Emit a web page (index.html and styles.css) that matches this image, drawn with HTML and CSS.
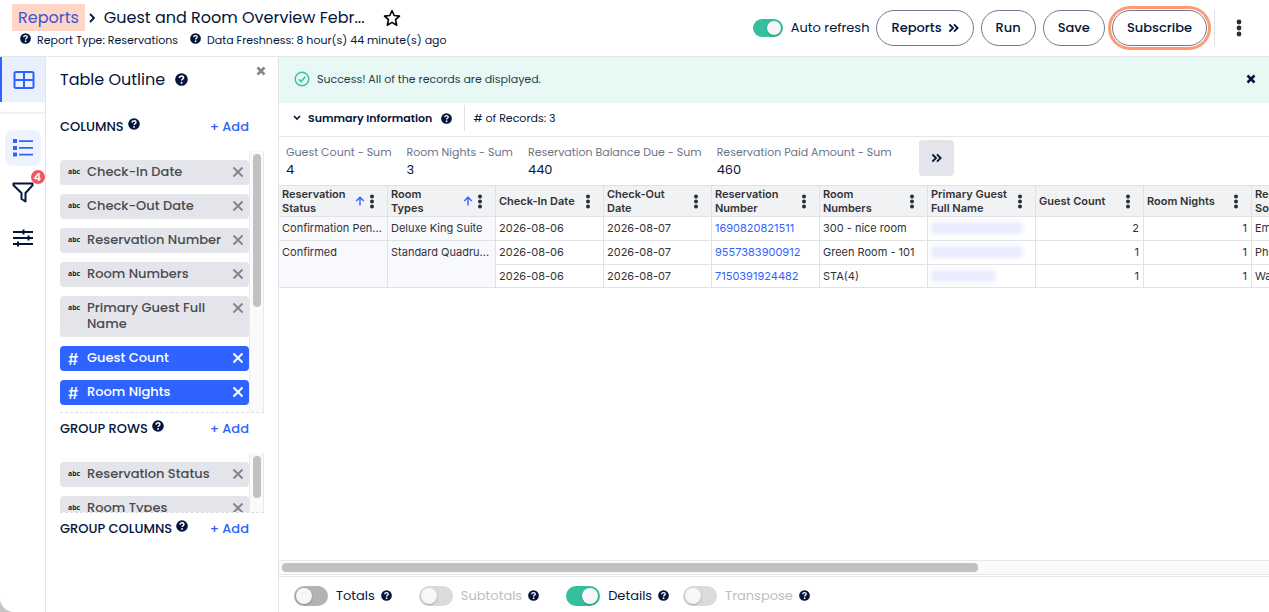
FILE: index.html
```html
<!DOCTYPE html>
<html lang="en">
<head>
<meta charset="utf-8">
<title>Guest and Room Overview</title>
<link rel="stylesheet" href="styles.css">
</head>
<body>
<svg class="sprite" aria-hidden="true">
  <symbol id="help" viewBox="0 0 14 14"><circle cx="7" cy="7" r="6.8" fill="#04153c"/><path d="M4.8 5.4C4.8 4.1 5.8 3.3 7 3.3s2.2.8 2.2 1.9c0 1.5-2.1 1.5-2.1 3" fill="none" stroke="#fff" stroke-width="1.7"/><circle cx="7.1" cy="10.4" r="1.1" fill="#fff"/></symbol>
  <symbol id="dots" viewBox="0 0 6 18"><circle cx="3" cy="3" r="2.4"/><circle cx="3" cy="9" r="2.4"/><circle cx="3" cy="15" r="2.4"/></symbol>
  <symbol id="cross" viewBox="0 0 12 12"><path d="M1.5 1.5l9 9M10.5 1.5l-9 9" fill="none" stroke="currentColor" stroke-width="2"/></symbol>
  <symbol id="cross-bold" viewBox="0 0 10 10"><path d="M1.5 1.5l7 7M8.5 1.5l-7 7" fill="none" stroke="currentColor" stroke-width="2.5"/></symbol>
  <symbol id="chevrons" viewBox="0 0 12 10"><path d="M1.5 1l4 4-4 4M6.500 1l4 4-4 4" fill="none" stroke="currentColor" stroke-width="2"/></symbol>
  <symbol id="up" viewBox="0 0 10 10"><path d="M5 9.5V1.5M1.2 5L5 1.2 8.800 5" fill="none" stroke="#2f63ff" stroke-width="1.4"/></symbol>
</svg>
<div class="app">
  <header class="header">
    <div class="heading">
      <div class="crumbs">
        <a class="crumb-link" href="#">Reports</a>
        <svg class="crumb-arrow" viewBox="0 0 6 10"><path d="M1 1l4 4-4 4" fill="none" stroke="#04153c" stroke-width="1.8"/></svg>
        <h1 class="page-title">Guest and Room Overview Febr...</h1>
        <button class="bare star" aria-label="Favorite"><svg viewBox="0 0 18 18" width="18" height="18"><path d="M9 1.500l2.200 5 5.300.6-4 3.600 1.200 5.500L9 13.400l-4.700 2.800 1.200-5.500-4-3.600 5.300-.6z" fill="none" stroke="#000" stroke-width="1.6" stroke-linejoin="round"/></svg></button>
      </div>
      <div class="meta">
        <span class="meta-item"><svg class="help-s"><use href="#help"/></svg><span>Report Type: Reservations</span></span>
        <span class="meta-item"><svg class="help-s"><use href="#help"/></svg><span>Data Freshness: 8 hour(s) 44 minute(s) ago</span></span>
      </div>
    </div>
    <div class="actions">
      <label class="auto"><input class="switch switch-small" type="checkbox" role="switch" checked><span>Auto refresh</span></label>
      <button class="pill">Reports <svg class="chev"><use href="#chevrons"/></svg></button>
      <button class="pill">Run</button>
      <button class="pill">Save</button>
      <button class="pill pill-ring">Subscribe</button>
      <span class="divider"></span>
      <button class="bare more" aria-label="More"><svg class="more-dots"><use href="#dots"/></svg></button>
    </div>
  </header>
  <div class="body">
    <nav class="rail">
      <button class="bare rail-tab" aria-label="Table"><svg viewBox="0 0 22 18" width="22" height="18"><g fill="none" stroke="#2f63ff" stroke-width="2"><rect x="1.500" y="1" width="19" height="16" rx="1.500"/><path d="M11 1v16M1.500 9h19"/></g></svg></button>
      <div class="rail-tools">
        <button class="bare rail-btn rail-active" aria-label="Outline"><svg viewBox="0 0 22 18" width="22" height="18"><g fill="#2f63ff"><path d="M1 0h4v4H1zM1 7h4v4H1zM1 13.500h4v4H1z"/><path d="M7 1.200h14v1.800H7zM7 8h14v1.800H7zM7 14.800h14v1.800H7z"/></g></svg></button>
        <button class="bare rail-btn" aria-label="Filters"><svg viewBox="0 0 22 22" width="22" height="22"><path d="M1.500 1.500h19v1.800l-7 7.700v8.500l-4-2.500v-6l-8-7.700z" fill="none" stroke="#04153c" stroke-width="2" stroke-linejoin="round"/></svg><span class="badge">4</span></button>
        <button class="bare rail-btn" aria-label="Settings"><svg viewBox="0 0 22 18" width="22" height="18"><path d="M1 3h20M1 9h20M1 15h20M11.500 0.500v5M16.500 6.500v5M6 12.500v5" fill="none" stroke="#04153c" stroke-width="2"/></svg></button>
      </div>
    </nav>
    <aside class="panel">
      <div class="panel-top"><h2 class="panel-title">Table Outline</h2><svg class="help-m"><use href="#help"/></svg><button class="bare panel-close" aria-label="Close"><svg class="x-bold"><use href="#cross-bold"/></svg></button></div>
      <div class="sec-head"><h3 class="sec-title">COLUMNS</h3><svg class="help-sec"><use href="#help"/></svg><button class="bare add">+ Add</button></div>
      <div class="list list-long">
        <ul class="chips">
          <li class="chip"><span class="kind">abc</span><span class="name">Check-In Date</span><button class="bare" aria-label="Remove"><svg class="x"><use href="#cross"/></svg></button></li>
          <li class="chip"><span class="kind">abc</span><span class="name">Check-Out Date</span><button class="bare" aria-label="Remove"><svg class="x"><use href="#cross"/></svg></button></li>
          <li class="chip"><span class="kind">abc</span><span class="name">Reservation Number</span><button class="bare" aria-label="Remove"><svg class="x"><use href="#cross"/></svg></button></li>
          <li class="chip"><span class="kind">abc</span><span class="name">Room Numbers</span><button class="bare" aria-label="Remove"><svg class="x"><use href="#cross"/></svg></button></li>
          <li class="chip"><span class="kind">abc</span><span class="name">Primary Guest Full Name</span><button class="bare" aria-label="Remove"><svg class="x"><use href="#cross"/></svg></button></li>
          <li class="chip chip-blue"><span class="kind hash">#</span><span class="name">Guest Count</span><button class="bare" aria-label="Remove"><svg class="x"><use href="#cross"/></svg></button></li>
          <li class="chip chip-blue"><span class="kind hash">#</span><span class="name">Room Nights</span><button class="bare" aria-label="Remove"><svg class="x"><use href="#cross"/></svg></button></li>
        </ul>
        <div class="track"><div class="thumb thumb-long"></div></div>
      </div>
      <div class="sec-head"><h3 class="sec-title">GROUP ROWS</h3><svg class="help-sec"><use href="#help"/></svg><button class="bare add">+ Add</button></div>
      <div class="list list-short">
        <ul class="chips">
          <li class="chip"><span class="kind">abc</span><span class="name">Reservation Status</span><button class="bare" aria-label="Remove"><svg class="x"><use href="#cross"/></svg></button></li>
          <li class="chip"><span class="kind">abc</span><span class="name">Room Types</span><button class="bare" aria-label="Remove"><svg class="x"><use href="#cross"/></svg></button></li>
        </ul>
        <div class="track"><div class="thumb thumb-short"></div></div>
      </div>
      <div class="sec-head"><h3 class="sec-title">GROUP COLUMNS</h3><svg class="help-sec"><use href="#help"/></svg><button class="bare add">+ Add</button></div>
    </aside>
    <main class="main">
      <div class="alert" role="status"><svg viewBox="0 0 16 16" width="16" height="16"><g fill="none" stroke="#36c2a1" stroke-width="1.4"><circle cx="8" cy="8" r="6.8"/><path d="M4.800 8.200l2.300 2.300 4.200-4.700" stroke-width="1.6"/></g></svg><span>Success! All of the records are displayed.</span><button class="bare alert-close" aria-label="Dismiss"><svg class="x-bold"><use href="#cross-bold"/></svg></button></div>
      <div class="summary">
        <button class="bare summary-toggle"><svg viewBox="0 0 8 6" width="8" height="6"><path d="M1 1l3 3 3-3" fill="none" stroke="#04153c" stroke-width="1.6"/></svg>Summary Information</button>
        <svg class="help-s"><use href="#help"/></svg>
        <span class="records"># of Records: 3</span>
      </div>
      <div class="metrics">
        <dl class="metric"><dt>Guest Count - Sum</dt><dd>4</dd></dl>
        <dl class="metric"><dt>Room Nights - Sum</dt><dd>3</dd></dl>
        <dl class="metric"><dt>Reservation Balance Due - Sum</dt><dd>440</dd></dl>
        <dl class="metric"><dt>Reservation Paid Amount - Sum</dt><dd>460</dd></dl>
        <button class="bare next" aria-label="Next"><svg class="chev"><use href="#chevrons"/></svg></button>
      </div>
      <div class="grid-wrap">
        <table class="grid">
          <thead><tr>
            <th class="first"><div class="th"><span>Reservation Status</span><svg class="up"><use href="#up"/></svg><svg class="dots"><use href="#dots"/></svg></div></th>
            <th><div class="th"><span>Room<br>Types</span><svg class="up"><use href="#up"/></svg><svg class="dots"><use href="#dots"/></svg></div></th>
            <th><div class="th"><span>Check-In Date</span><svg class="dots"><use href="#dots"/></svg></div></th>
            <th><div class="th"><span>Check-Out<br>Date</span><svg class="dots"><use href="#dots"/></svg></div></th>
            <th><div class="th"><span>Reservation Number</span><svg class="dots"><use href="#dots"/></svg></div></th>
            <th><div class="th"><span>Room<br>Numbers</span><svg class="dots"><use href="#dots"/></svg></div></th>
            <th><div class="th"><span>Primary Guest Full Name</span><svg class="dots"><use href="#dots"/></svg></div></th>
            <th><div class="th"><span>Guest Count</span><svg class="dots"><use href="#dots"/></svg></div></th>
            <th><div class="th"><span>Room Nights</span><svg class="dots"><use href="#dots"/></svg></div></th>
            <th><div class="th"><span>Reservation Source</span></div></th>
          </tr></thead>
          <tbody>
            <tr><td class="group">Confirmation Pen...</td><td class="group">Deluxe King Suite</td><td>2026-08-06</td><td>2026-08-07</td><td><a href="#">1690820821511</a></td><td>300 - nice room</td><td><span class="masked"></span></td><td class="num">2</td><td class="num">1</td><td>Email</td></tr>
            <tr><td class="group" rowspan="2">Confirmed</td><td class="group" rowspan="2">Standard Quadru...</td><td>2026-08-06</td><td>2026-08-07</td><td><a href="#">9557383900912</a></td><td>Green Room - 101</td><td><span class="masked"></span></td><td class="num">1</td><td class="num">1</td><td>Phone</td></tr>
            <tr class="last"><td>2026-08-06</td><td>2026-08-07</td><td><a href="#">7150391924482</a></td><td>STA(4)</td><td><span class="masked masked-short"></span></td><td class="num">1</td><td class="num">1</td><td>Walk-In</td></tr>
          </tbody>
        </table>
      </div>
      <div class="hscroll"><div class="hthumb"></div></div>
      <footer class="options">
        <div class="option option-dark option-wide"><label><input class="switch" type="checkbox" role="switch"><span>Totals</span></label><svg class="help-s"><use href="#help"/></svg></div>
        <div class="option option-off option-wide"><label><input class="switch" type="checkbox" role="switch" disabled><span>Subtotals</span></label><svg class="help-s"><use href="#help"/></svg></div>
        <div class="option"><label><input class="switch" type="checkbox" role="switch" checked><span>Details</span></label><svg class="help-s"><use href="#help"/></svg></div>
        <div class="option option-off"><label><input class="switch" type="checkbox" role="switch" disabled><span>Transpose</span></label><svg class="help-s"><use href="#help"/></svg></div>
      </footer>
    </main>
  </div>
</div>
</body>
</html>
```
FILE: styles.css
```css
* { box-sizing: border-box; }
body { margin: 0; background: #c4c4c4; color: #04153c; font-family: Poppins, Inter, sans-serif; font-size: 13px; }
h1, h2, h3, ul, dl, dd { margin: 0; padding: 0; font-weight: 400; }
svg { display: block; flex: none; }
a { color: #2f63ff; text-decoration: none; }
.sprite { width: 0; height: 0; position: absolute; }
.bare { border: 0; padding: 0; background: none; color: inherit; font: inherit; }
.app { height: 100vh; display: flex; flex-direction: column; background: #fff; border-bottom-left-radius: 14px; overflow: hidden; }
.help-s { width: 11px; height: 11px; }
.help-m { width: 13px; height: 13px; }
.x { width: 12px; height: 12px; }
.x-bold { width: 10px; height: 10px; }
.chev { width: 11px; height: 10px; }

.header { display: flex; justify-content: space-between; height: 57px; border-bottom: 1px solid #e4e5e9; }
.heading { padding: 4px 0 0 12px; }
.crumbs { display: flex; align-items: center; height: 27px; font-size: 16px; }
.crumb-link { padding: 0 6px; line-height: 27px; background: #ffd5c8; color: #3a57cf; }
.crumb-arrow { width: 6px; height: 10px; margin: 0 9px 0 4px; }
.page-title { font-size: 16px; }
.star { margin-left: 18px; }
.meta { display: flex; gap: 12px; padding-left: 8px; font-size: 11px; line-height: 18px; }
.meta-item { display: flex; gap: 6px; }
.meta-item .help-s { margin-top: 2px; }
.actions { display: flex; align-items: center; gap: 7px; padding-right: 27px; }
.auto { display: flex; align-items: center; gap: 8px; }
.pill { display: flex; align-items: center; gap: 6px; height: 36px; padding: 0 14px; border: 1px solid #6f7892; border-radius: 18px; background: #fff; color: #04153c; font: 500 13px Poppins, Inter, sans-serif; }
.pill-ring { box-shadow: 0 0 0 1px #fff, 0 0 0 4px #ff9a73; }
.divider { width: 1px; height: 36px; background: #dfe0e5; }
.more { padding-left: 14px; }
.more-dots { width: 6px; height: 18px; fill: #2d2f36; }

.switch { appearance: none; position: relative; width: 34px; height: 20px; margin: 0; border-radius: 10px; background: #dbdbdb; }
.switch::before { content: ""; position: absolute; left: 2px; top: 2px; width: 16px; height: 16px; border-radius: 50%; background: #f7f7f7; box-shadow: 0 1px 2px rgba(0, 0, 0, .25); }
.switch:checked { background: #35bf9f; }
.switch:checked::before { left: auto; right: 2px; }
.switch-small { width: 30px; height: 18px; }
.switch-small::before { width: 14px; height: 14px; }

.body { flex: 1; display: flex; min-height: 0; }
.rail { flex: none; width: 46px; border-right: 1px solid #e4e5e9; }
.rail-tab { display: flex; align-items: center; justify-content: center; width: 100%; height: 45px; border-left: 2px solid #2f63ff; background: #e9effd; }
.rail-tools { display: flex; flex-direction: column; align-items: center; gap: 9px; margin-top: 10px; padding-top: 16px; border-top: 2px solid #f0f1f3; }
.rail-btn { position: relative; display: flex; align-items: center; justify-content: center; width: 36px; height: 36px; border-radius: 8px; }
.rail-active { background: #edf2fd; }
.badge { position: absolute; top: -5px; right: -4px; width: 14px; border-radius: 7px; background: #f5545f; color: #fff; font-size: 11px; font-weight: 600; line-height: 14px; text-align: center; }

.panel { flex: none; width: 233px; padding: 0 14px; border-right: 1px solid #e4e5e9; }
.panel-top { display: flex; align-items: center; gap: 10px; height: 54px; padding-bottom: 10px; }
.panel-title { font-size: 16px; }
.panel-close { align-self: flex-start; margin-left: auto; margin-right: -2px; padding-top: 9px; color: #85868a; }
.sec-head { display: flex; align-items: center; gap: 4px; height: 40px; padding: 0 15px 9px 0; }
.sec-title { font-size: 13px; font-weight: 500; }
.help-sec { width: 12px; height: 12px; margin-bottom: 5px; }
.add { margin-left: auto; color: #2f63ff; font-weight: 500; }
.list { display: flex; overflow: hidden; border-bottom: 1px dashed #dcdde1; }
.list-long { height: 262px; }
.list-short { height: 60px; }
.chips { flex: 1; display: flex; flex-direction: column; gap: 9px; padding-top: 9px; list-style: none; }
.chip { flex: none; display: flex; align-items: flex-start; padding: 4px 5px 5px 8px; border-radius: 4px; background: #e4e5ea; color: #4a4b50; font-weight: 500; line-height: 16px; }
.kind { width: 19px; color: #26272b; font: 700 7px/15px "Noto Sans", sans-serif; }
.hash { color: inherit; font: 500 16px/18px Inter, sans-serif; height: 16px; }
.name { flex: 1; }
.chip .x { margin-top: 2px; color: #85868a; }
.chip-blue { background: #2f63ff; color: #fff; }
.chip-blue .x { color: #fff; }
.track { width: 15px; padding: 3px 3px 0; border: solid #e9e9eb; border-width: 0 1px; background: #fafafa; }
.thumb { width: 8px; border-radius: 4px; background: #c1c1c1; }
.thumb-long { height: 153px; }
.thumb-short { height: 42px; }

.main { flex: 1; min-width: 0; display: flex; flex-direction: column; }
.alert { display: flex; align-items: center; gap: 7px; height: 46px; padding: 0 13px 2px 15px; background: #e8f8f5; color: #1c3f4b; font-size: 11px; }
.alert-close { margin-left: auto; color: #04153c; }
.summary { display: flex; align-items: center; gap: 9px; height: 34px; padding: 0 14px 3px; border-bottom: 1px solid #e4e5e9; font-size: 11px; }
.summary-toggle { display: flex; align-items: center; gap: 7px; font-weight: 600; }
.records { margin-left: 3px; padding-left: 8px; border-left: 1px solid #dfe0e5; line-height: 26px; }
.metrics { display: flex; gap: 15px; height: 48px; padding: 3px 7px 0; }
.metric { padding-top: 4px; }
.metric dt { color: #6c7385; font-size: 11px; line-height: 17px; }
.metric dd { line-height: 17px; }
.next { display: flex; align-items: center; justify-content: center; width: 35px; height: 36px; margin-left: 12px; border-radius: 4px; background: #e4e5ea; }

.grid-wrap { flex: 1; min-height: 0; overflow: hidden; }
.grid { width: 1081px; table-layout: fixed; border-collapse: separate; border-spacing: 0; border-top: 1px solid #dfe1e5; color: #303238; font-family: Inter, sans-serif; font-size: 11px; }
.grid th { width: 108px; height: 31px; padding: 0 12px 0 3px; border: solid #dfe1e5; border-width: 0 1px 1px 0; background: #f1f2f4; font-weight: 600; text-align: left; line-height: 14px; }
.grid .first { width: 109px; }
.th { display: flex; align-items: center; gap: 4px; }
.th span { flex: 1; }
.up { width: 10px; height: 10px; }
.dots { width: 6px; height: 15px; fill: #2d2f36; }
.grid td { height: 24px; padding: 0 4px 1px 3px; border: solid #dfe1e5; border-width: 0 1px 1px 0; white-space: nowrap; line-height: 16px; }
.grid .last td { height: 23px; }
.grid .group { padding-top: 3px; background: #f8f9fc; vertical-align: top; }
.grid .num { text-align: right; }
.masked { display: block; width: 92px; height: 12px; border-radius: 3px; background: #e9ecfe; filter: blur(2px); }
.masked-short { width: 64px; }

.hscroll { height: 15px; padding: 2px 3px; border: solid #e7e7e9; border-width: 1px 0; background: #fafafa; }
.hthumb { width: 70.7%; height: 9px; border-radius: 4px; background: #c1c1c1; }
.options { display: flex; align-items: center; gap: 14px; height: 36px; margin-top: 1px; padding: 2px 15px 0; border-top: 1px solid #e4e5e9; }
.option, .option label { display: flex; align-items: center; gap: 8px; }
.option { gap: 6px; }
.option-wide { margin-right: 13px; }
.option-dark .switch { background: #b3b3b3; }
.option-off label { color: #bcbdc1; }
```
